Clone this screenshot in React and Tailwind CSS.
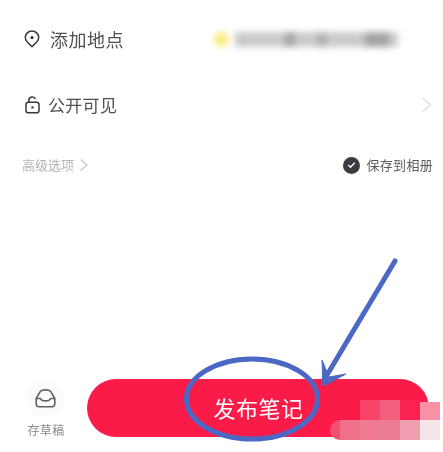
import React from "react";

const F = { fontFamily: '"Noto Sans CJK SC", "Liberation Sans", sans-serif' };

const mosaic = [
  [360, 400, 20, 20, "#f74468"], [380, 400, 20, 20, "#f3607f"], [400, 400, 20, 20, "#fb2150"], [420, 402, 20, 18, "#f791a5"],
  [340, 420, 20, 20, "#ee708b"], [360, 420, 20, 20, "#ee7a93"], [380, 420, 20, 20, "#ec7c95"], [400, 420, 20, 20, "#ef9fb0"], [420, 420, 20, 20, "#f5e5e8"],
];

export default function App() {
  return (
    <div className="relative w-[443px] h-[452px] bg-white overflow-hidden" style={F}>
      <div className="flex items-center h-[78px] pl-6 pr-4">
        <svg width="16" height="18" viewBox="0 0 16 18" fill="none" stroke="#3a3a3a" strokeWidth="1.5">
          <path d="M8 16.6C4.4 13.6 1.3 10.8 1.3 7.6a6.7 6.7 0 0 1 13.4 0c0 3.2-3.1 6-6.7 9Z" />
          <circle cx="8" cy="7.6" r="1.6" fill="#3a3a3a" stroke="none" />
        </svg>
        <span className="ml-[10px] text-[18px] leading-6 tracking-[0.5px] text-[#505050] blur-[0.5px]">添加地点</span>
        <div className="ml-auto mr-[29px] flex items-center gap-[6px] blur-[3px]">
          <span className="w-[15px] h-[15px] rounded-full bg-[#f8ec80]" />
          <div className="flex items-center w-[163px] h-[15px] bg-[#cacaca]">
            <span className="ml-[50px] w-[10px] h-[15px] bg-[#a6a6a6]" />
            <span className="ml-[22px] w-[10px] h-[15px] bg-[#b2b2b2]" />
            <span className="ml-[38px] w-[24px] h-[15px] bg-[#a4a4a4]" />
          </div>
        </div>
      </div>
      <div className="flex items-center h-[54px] pl-[25px] pr-[11px]">
        <svg width="15" height="18" viewBox="0 0 15 18" fill="none" stroke="#3a3a3a" strokeWidth="1.5">
          <rect x="1" y="6.2" width="13" height="10.6" rx="2.4" />
          <path d="M3.8 6V4.4a3.5 3.5 0 0 1 6.7-1.4" />
          <circle cx="7.5" cy="11.4" r="1.2" fill="#3a3a3a" stroke="none" />
        </svg>
        <span className="ml-[8px] text-[17px] leading-6 tracking-[0.3px] text-[#505050] blur-[0.5px]">公开可见</span>
        <svg className="ml-auto" width="11" height="18" viewBox="0 0 11 18" fill="none" stroke="#e2e2e2" strokeWidth="1.6">
          <path d="M1.5 2l8 7-8 7" />
        </svg>
      </div>
      <div className="flex items-center justify-between h-[66px] pl-[22px] pr-[10px]">
        <div className="flex items-center gap-[5px]">
          <span className="text-[13px] leading-5 text-[#b4b4b4] blur-[0.5px]">高级选项</span>
          <svg width="10" height="14" viewBox="0 0 10 14" fill="none" stroke="#c8c8c8" strokeWidth="1.4">
            <path d="M1.5 1.5l6.5 5.5-6.5 5.5" />
          </svg>
        </div>
        <div className="flex items-center gap-[6px]">
          <span className="flex items-center justify-center w-[17px] h-[17px] rounded-full bg-[#3c3c40]">
            <svg width="9" height="8" viewBox="0 0 9 8" fill="none" stroke="#ffffff" strokeWidth="1.4">
              <path d="M1.2 4l2.3 2.2 4.2-4.4" />
            </svg>
          </span>
          <span className="text-[13px] leading-5 tracking-[0.3px] text-[#5c5c5c] blur-[0.4px]">保存到相册</span>
        </div>
      </div>
      <div className="flex items-start h-[254px] pt-[181px] pl-[26px] pr-[14px]">
        <div className="flex flex-col items-center w-[38px]">
          <span className="flex items-center justify-center w-[38px] h-[38px] rounded-full bg-[#fbfbfb]">
            <svg width="21" height="20" viewBox="0 0 21 20" fill="none" stroke="#606060" strokeWidth="1.6" strokeLinejoin="round">
              <path d="M1.2 10.5 5.5 3.2C7 1.4 14 1.4 15.5 3.2l4.3 7.3v5.2a3 3 0 0 1-3 3H4.2a3 3 0 0 1-3-3Z" />
              <path d="M1.2 10.5h4.3c1 3.2 9 3.2 10 0h4.3" />
            </svg>
          </span>
          <span className="mt-[3px] ml-[2px] whitespace-nowrap text-[12px] leading-5 tracking-[0.3px] text-[#8a8a8a] blur-[0.4px]">存草稿</span>
        </div>
        <button className="ml-[23px] flex-1 h-[58px] rounded-full bg-[#fb1b48] text-white text-[22px] tracking-[0.5px] flex items-center justify-center pb-[2px] pl-[1px]" style={F}>
          <span className="blur-[0.5px]">发布笔记</span>
        </button>
      </div>

      <div className="absolute left-[330px] top-[420px] w-[14px] h-[20px] rounded-l-full bg-[#f44f70]" />
      {mosaic.map(([x, y, w, h, c], i) => (
        <div key={i} className="absolute" style={{ left: x, top: y, width: w, height: h, background: c }} />
      ))}

      <svg className="absolute left-0 top-0 pointer-events-none" width="443" height="452" viewBox="0 0 443 452" fill="none">
        <ellipse cx="252" cy="399" rx="65.5" ry="40" stroke="#4a68c4" strokeWidth="5" />
        <path d="M395 261 324 380" stroke="#4a68c4" strokeWidth="5" strokeLinecap="round" />
        <path d="M322 360 323 386 346 374 329 377Z" fill="#4a68c4" stroke="#4a68c4" strokeWidth="1" />
      </svg>
    </div>
  );
}
